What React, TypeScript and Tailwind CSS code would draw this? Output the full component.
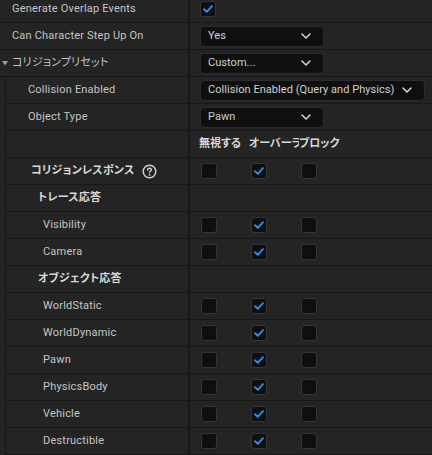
import { ReactNode } from "react"

const font = "font-['Roboto','Noto_Sans_CJK_JP',sans-serif]"

function Check({ on }: { on?: boolean }) {
  return (
    <div className="flex h-4 w-4 items-center justify-center rounded-[3px] border border-[#353535] bg-[#0f0f0f]">
      {on && (
        <svg width="10" height="8" viewBox="0 0 10 8" fill="none">
          <path d="M1 4.2 L3.8 6.8 L9 1.2" stroke="#2a8df0" strokeWidth="1.9" strokeLinecap="round" strokeLinejoin="round" />
        </svg>
      )}
    </div>
  )
}

function Chevron() {
  return (
    <svg width="10" height="6" viewBox="0 0 10 6" fill="none" className="shrink-0">
      <path d="M1 1 L5 5 L9 1" stroke="#d8d8d8" strokeWidth="1.5" strokeLinecap="round" strokeLinejoin="round" />
    </svg>
  )
}

function Combo({ label, wide }: { label: string; wide?: boolean }) {
  return (
    <div className={`flex h-[21px] items-center justify-between rounded-[4px] border border-[#2c2c2c] bg-[#0f0f0f] pl-[7px] pr-[12px] tracking-[0.05px] text-[#d0d0d0] ${wide ? "w-[225px]" : "w-[124px]"}`}>
      <span className="whitespace-nowrap">{label}</span>
      <Chevron />
    </div>
  )
}

function Help() {
  return (
    <svg width="15" height="15" viewBox="0 0 15 15" fill="none" className="ml-[8px]">
      <circle cx="7.5" cy="7.5" r="6.3" stroke="#cfcfcf" strokeWidth="1.5" />
      <path d="M5.6 6 C5.6 4.9 6.4 4.2 7.5 4.2 C8.6 4.2 9.4 4.9 9.4 5.8 C9.4 7 7.6 7.1 7.6 8.6" stroke="#cfcfcf" strokeWidth="1.4" strokeLinecap="round" fill="none" />
      <circle cx="7.6" cy="10.8" r="0.9" fill="#cfcfcf" />
    </svg>
  )
}

function Row({
  label,
  pl,
  child,
  bold,
  right,
  arrow,
}: {
  label: ReactNode
  pl: string
  child?: boolean
  bold?: boolean
  right?: ReactNode
  arrow?: boolean
}) {
  return (
    <div className="flex h-[27px] border-b border-[#171717]">
      <div
        className={`flex shrink-0 items-center border-r-2 border-[#171717] ${child ? "w-[184px]" : "w-[190px]"} ${pl} ${
          bold ? "font-bold text-[#d8d8d8]" : "text-[#c4c4c4]"
        }`}
      >
        {arrow && (
          <svg width="10" height="5" viewBox="0 0 10 5" className="ml-[-11px] mr-[1px] shrink-0">
            <path d="M1 0 L7 0 L4 4.5 Z" fill="#a0a0a0" />
          </svg>
        )}
        {label}
      </div>
      <div className="flex flex-1 items-center pl-[10px]">{right}</div>
    </div>
  )
}

function Checks({ a, b, c }: { a?: boolean; b?: boolean; c?: boolean }) {
  return (
    <div className="flex gap-[34px] pl-[1px]">
      <Check on={a} />
      <Check on={b} />
      <Check on={c} />
    </div>
  )
}

export default function App() {
  const channels = ["WorldStatic", "WorldDynamic", "Pawn", "PhysicsBody", "Vehicle", "Destructible"]
  return (
    <div className={`h-[455px] w-[432px] overflow-hidden bg-[#242424] text-[11px] tracking-[0.2px] [font-feature-settings:'palt'] ${font}`}>
      <div className="-mt-[4px]">
        <Row label="Generate Overlap Events" pl="pl-[12px]" right={<Check on />} />
        <Row label="Can Character Step Up On" pl="pl-[12px]" right={<Combo label="Yes" />} />
        <Row label="コリジョンプリセット" pl="pl-[12px]" arrow right={<Combo label="Custom..." />} />
        <div className="ml-[5px] border-l border-[#171717]">
          <Row child label="Collision Enabled" pl="pl-[22px]" right={<Combo wide label="Collision Enabled (Query and Physics)" />} />
          <Row child label="Object Type" pl="pl-[22px]" right={<Combo label="Pawn" />} />
          <Row
            child
            label=""
            pl="pl-[22px]"
            right={
              <div className="-ml-[1px] flex font-bold tracking-normal text-[#d8d8d8]">
                <span className="w-[50px] overflow-hidden whitespace-nowrap">無視する</span>
                <span className="w-[50px] overflow-hidden whitespace-nowrap">オーバーラップ</span>
                <span className="w-[50px] overflow-hidden whitespace-nowrap">ブロック</span>
              </div>
            }
          />
          <Row
            child
            bold
            label={
              <>
                コリジョンレスポンス
                <Help />
              </>
            }
            pl="pl-[25px]"
            right={<Checks b />}
          />
          <Row child bold label="トレース応答" pl="pl-[32px]" />
          <Row child label="Visibility" pl="pl-[37px]" right={<Checks b />} />
          <Row child label="Camera" pl="pl-[37px]" right={<Checks b />} />
          <Row child bold label="オブジェクト応答" pl="pl-[32px]" />
          {channels.map((c) => (
            <Row key={c} child label={c} pl="pl-[37px]" right={<Checks b />} />
          ))}
        </div>
      </div>
    </div>
  )
}
